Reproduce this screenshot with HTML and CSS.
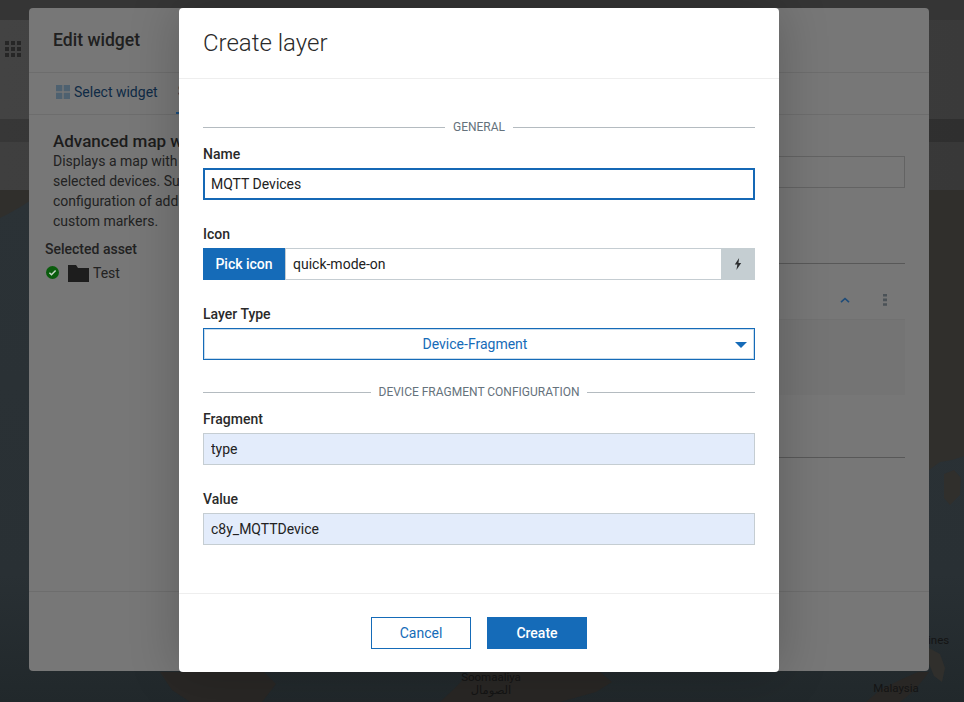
FILE: index.html
```html
<!DOCTYPE html>
<html>
  <head>
    <link rel="stylesheet" href="styles.css">
  </head>
  <body>
    <div id="app">
      <div class="topstrip"></div>
      <div class="topbar">
        <svg class="apps-icon" width="16" height="16" viewBox="0 0 16 16">
          <path d="M0 0h4v4H0zM6 0h4v4H6zM12 0h4v4h-4zM0 6h4v4H0zM6 6h4v4H6zM12 6h4v4h-4zM0 12h4v4H0zM6 12h4v4H6zM12 12h4v4h-4z"/>
        </svg>
      </div>
      <div class="tabstrip"></div>
      <div class="toolbar"></div>
      <svg class="map" viewBox="0 190 964 512" preserveAspectRatio="none">
        <defs>
          <linearGradient id="sea" x1="0" y1="0" x2="0" y2="1">
            <stop offset="0" stop-color="#2b3236"/>
            <stop offset=".75" stop-color="#293034"/>
            <stop offset="1" stop-color="#21282b"/>
          </linearGradient>
        </defs>
        <rect x="0" y="190" width="964" height="512" fill="url(#sea)"/>
        <path class="land" d="M0 190H34V198L22 206L8 214L0 218Z"/>
        <path class="land" d="M929 190H964V456L952 460L940 462L929 470Z"/>
        <path class="land" d="M944 474L954 470L961 478L960 495L950 505L944 498Z"/>
        <path class="land" d="M929 648L940 654L945 668L942 682L934 676L929 664Z"/>
        <path class="land bottom" d="M160 672H264L276 684L262 702H190L172 690Z"/>
        <path class="land bottom" d="M440 702L455 688L470 672H600L612 682L596 692L560 702Z"/>
        <path class="land bottom" d="M866 702L880 690L900 680L918 672H929L915 690L900 702Z"/>
        <text class="map-label" x="491" y="681" text-anchor="middle">Soomaaliya</text>
        <text class="map-label" x="491" y="694" text-anchor="middle">الصومال</text>
        <text class="map-label" x="896" y="692" text-anchor="middle">Malaysia</text>
        <text class="map-label" x="928" y="644">ines</text>
      </svg>
    </div>

    <div id="widget-dialog" class="dialog">
      <div class="widget-header">Edit widget</div>
      <div class="widget-tabs">
        <a class="tab">
          <svg width="14" height="14" viewBox="0 0 14 14"><path d="M0 0h6.3v6.3H0zM7.7 0H14v6.3H7.7zM0 7.7h6.3V14H0zM7.7 7.7H14V14H7.7z"/></svg>
          Select widget
        </a>
        <a class="tab active">S</a>
      </div>
      <div class="widget-body">
        <div class="widget-info">
          <h4>Advanced map w</h4>
          <p>Displays a map with</p>
          <p>selected devices. Su</p>
          <p>configuration of add</p>
          <p>custom markers.</p>
          <div class="asset-title">Selected asset</div>
          <div class="asset-row">
            <svg class="check" width="13" height="13" viewBox="0 0 13 13">
              <circle cx="6.5" cy="6.5" r="6.5" fill="#0a5c0d"/>
              <path d="M3.4 6.8L5.5 8.8L9.6 4.6" fill="none" stroke="#c8d8c8" stroke-width="1.5"/>
            </svg>
            <svg class="folder" width="21" height="17" viewBox="0 0 21 17"><path d="M0 0h8l2 3h11v14H0z"/></svg>
            <span>Test</span>
          </div>
        </div>
        <div class="widget-form">
          <div class="ghost-input"></div>
          <div class="ghost-line first"></div>
          <div class="ghost-panel">
            <div class="ghost-panel-head">
              <svg width="10" height="6" viewBox="0 0 10 6"><path d="M1 5.2L5 1.5L9 5.2" fill="none" stroke="#1d4b79" stroke-width="1.6"/></svg>
              <svg width="4" height="12" viewBox="0 0 4 12"><path d="M0 0h4v2.6H0zM0 4.6h4v2.6H0zM0 9.2h4v2.6H0z" fill="#4b5257"/></svg>
            </div>
          </div>
          <div class="ghost-line second"></div>
        </div>
      </div>
      <div class="widget-footer"></div>
    </div>

    <div id="layer-dialog" class="dialog">
      <div class="modal-header">Create layer</div>
      <form class="modal-body">
        <div class="legend">General</div>
        <div class="field">
          <label>Name</label>
          <input class="input focused" value="MQTT Devices"/>
        </div>
        <div class="field">
          <label>Icon</label>
          <div class="input-group">
            <button type="button" class="btn-pick">Pick icon</button>
            <input class="input" value="quick-mode-on"/>
            <span class="addon">
              <svg width="8" height="12" viewBox="0 0 10 13" preserveAspectRatio="none"><path d="M6.4 0L1 7H4.2L3 13L9 5.4H5.6Z" fill="#2d2f31"/></svg>
            </span>
          </div>
        </div>
        <div class="field">
          <label>Layer Type</label>
          <div class="select">
            Device-Fragment
            <svg class="caret" width="12" height="6" viewBox="0 0 12 6"><path d="M0 0H12L6 6Z"/></svg>
          </div>
        </div>
        <div class="legend">Device Fragment Configuration</div>
        <div class="field">
          <label>Fragment</label>
          <input class="input autofill" value="type"/>
        </div>
        <div class="field">
          <label>Value</label>
          <input class="input autofill" value="c8y_MQTTDevice"/>
        </div>
      </form>
      <div class="modal-footer">
        <button type="button" class="btn btn-default">Cancel</button>
        <button type="button" class="btn btn-primary">Create</button>
      </div>
    </div>
  </body>
</html>
```

FILE: styles.css
```css
* {
  box-sizing: border-box;
}

html,
body {
  height: 100%;
  margin: 0;
  overflow: hidden;
}

body {
  background: #2b3236;
  font-family: Roboto, "Liberation Sans", sans-serif;
  font-size: 14px;
  color: #222;
}

/* page behind the dialogs, already dimmed */
#app {
  display: flex;
  flex-direction: column;
  height: 100%;
}

.topstrip {
  height: 20px;
  background: #353535;
}

.topbar {
  height: 99px;
  background: linear-gradient(to right, #434343, #3a3a3a);
  padding: 21px 0 0 5px;
}

.apps-icon {
  display: block;
  fill: #262626;
}

.tabstrip {
  height: 23px;
  background: linear-gradient(to right, #373737, #2f2f2f);
}

.toolbar {
  height: 48px;
  background: linear-gradient(to right, #3f3f3f, #383838);
}

.map {
  flex: 1;
  min-height: 0;
  width: 100%;
}

.land {
  fill: #302f2c;
}

.land.bottom {
  fill: #292725;
}

.map-label {
  font-family: Roboto, "Liberation Sans", "DejaVu Sans", sans-serif;
  font-size: 11.5px;
  fill: #141414;
}

.dialog {
  position: absolute;
  top: 8px;
  display: flex;
  flex-direction: column;
  border-radius: 4px;
}

/* dimmed widget dialog */
#widget-dialog {
  left: 29px;
  width: 900px;
  height: 663px;
  background: #777;
}

.widget-header {
  height: 65px;
  flex-shrink: 0;
  padding: 21px 24px 0;
  border-bottom: 1px solid #6d6d6d;
  font-size: 17.6px;
  font-weight: 500;
  line-height: 22px;
  color: #202020;
}

.widget-tabs {
  display: flex;
  height: 42px;
  flex-shrink: 0;
  padding-left: 27px;
  border-bottom: 1px solid #6d6d6d;
  color: #0e2a45;
}

.tab {
  display: flex;
  align-items: center;
  gap: 4px;
  height: 38px;
  white-space: nowrap;
}

.tab svg {
  fill: #4e6170;
}

.tab.active {
  height: 41px;
  margin-left: 18px;
  padding: 0 2px 3px;
  border-bottom: 2px solid #1a4d7c;
}

.widget-body {
  display: flex;
  flex: 1;
  min-height: 0;
}

.widget-info {
  width: 150px;
  flex-shrink: 0;
  padding: 16px 0 0 24px;
  white-space: nowrap;
  line-height: 20px;
  color: #222;
}

.widget-info h4 {
  margin: 0;
  font-size: 17px;
  font-weight: 500;
  line-height: 20px;
  color: #1c1c1c;
}

.widget-info p {
  margin: 0;
}

.asset-title {
  margin: 8px 0 0 -8px;
  font-weight: 500;
}

.asset-row {
  display: flex;
  align-items: center;
  height: 24px;
  margin: 2px 0 0 -8px;
}

.check {
  margin: 0 9px 2px 1px;
}

.folder {
  fill: #1d1d1d;
  margin: 0 4px 0 0;
}

.widget-form {
  flex: 1;
  position: relative;
  padding: 41px 24px 0 0;
}

.ghost-input {
  height: 32px;
  border: 1px solid #636363;
}

.ghost-line {
  height: 1px;
  background: #585858;
}

.ghost-line.first {
  margin-top: 75px;
}

.ghost-line.second {
  margin-top: 62px;
}

.ghost-panel {
  height: 115px;
  margin-top: 16px;
  background: #747474;
}

.ghost-panel-head {
  display: flex;
  align-items: center;
  justify-content: flex-end;
  gap: 33px;
  height: 40px;
  padding: 0 18px 0 0;
  background: #777;
  border-bottom: 1px solid #717171;
}

.widget-footer {
  height: 80px;
  flex-shrink: 0;
  border-top: 1px solid #6d6d6d;
}

/* top modal */
#layer-dialog {
  left: 179px;
  width: 600px;
  height: 664px;
  background: #fff;
  box-shadow: 0 0 50px rgba(0, 0, 0, .22);
}

.modal-header {
  height: 71px;
  flex-shrink: 0;
  padding: 20px 24px 0;
  border-bottom: 1px solid #eee;
  font-size: 24px;
  font-weight: 300;
  line-height: 30px;
  color: #2a2a2a;
}

.modal-body {
  flex: 1;
  padding: 40px 24px 0;
}

.legend {
  display: flex;
  align-items: center;
  gap: 8px;
  height: 16px;
  margin-bottom: 9px;
  font-size: 12px;
  line-height: 16px;
  text-transform: uppercase;
  color: #65727c;
}

.legend::before,
.legend::after {
  content: "";
  flex: 1;
  height: 1px;
  background: #b4bbc0;
}

.field {
  margin-bottom: 24px;
}

.field label {
  display: block;
  height: 20px;
  margin-bottom: 4px;
  font-weight: 500;
  line-height: 20px;
  color: #2a2a2a;
}

.input {
  display: block;
  width: 100%;
  height: 32px;
  padding: 0 8px;
  border: 1px solid #c5cdd2;
  border-radius: 0;
  outline: none;
  background: #fff;
  font: inherit;
  color: #222;
}

.input.focused {
  border: 2px solid #1568b5;
  padding: 0 6px;
}

.input.autofill {
  background: #e3ecfb;
  padding-left: 7px;
}

.input-group {
  display: flex;
}

.input-group .input {
  flex: 1;
  min-width: 0;
  border-left: 0;
  padding-left: 7px;
  border-right: 0;
}

.btn-pick {
  width: 83px;
  height: 32px;
  border: 0;
  border-right: 1px solid #c5cdd2;
  background: #156bb8;
  font: inherit;
  font-weight: 500;
  color: #fff;
}

.addon {
  display: flex;
  align-items: center;
  justify-content: center;
  width: 34px;
  background: #c5ced2;
}

.select {
  position: relative;
  height: 32px;
  padding-right: 8px;
  border: 1px solid #156bb8;
  box-shadow: inset 0 0 0 1px #c9dcec;
  line-height: 30px;
  text-align: center;
  color: #156bb8;
}

.caret {
  position: absolute;
  top: 13px;
  right: 7px;
  fill: #156bb8;
}

.modal-footer {
  display: flex;
  justify-content: center;
  gap: 16px;
  height: 79px;
  flex-shrink: 0;
  padding-top: 23px;
  border-top: 1px solid #eee;
}

.btn {
  width: 100px;
  height: 32px;
  border: 1px solid #156bb8;
  border-radius: 0;
  font: inherit;
}

.btn-default {
  background: #fff;
  color: #156bb8;
}

.btn-primary {
  background: #156bb8;
  font-weight: 500;
  color: #fff;
}
```
